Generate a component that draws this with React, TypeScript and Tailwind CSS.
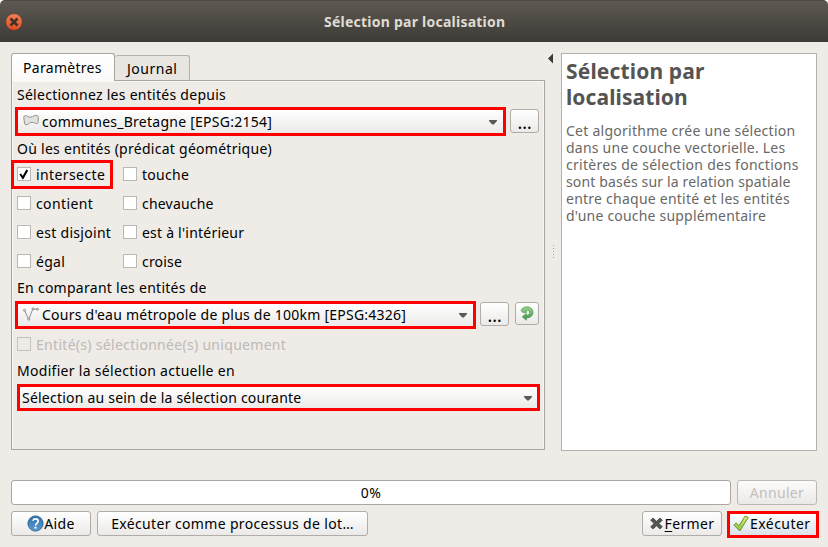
import type { ReactNode } from "react";

const button =
  "flex items-center justify-center rounded-[3px] border border-[#b0aca7] bg-gradient-to-b from-white to-[#ebeae8]";

function Text({ className = "", children }: { className?: string; children: ReactNode }) {
  return <span className={`whitespace-pre ${className}`}>{children}</span>;
}

function Chevron() {
  return (
    <svg className="ml-auto mt-px" width="8" height="5" viewBox="0 0 8 5">
      <path d="M0 0H8V1L4.8 4.5H3.2L0 1Z" fill="#5b5855" />
    </svg>
  );
}

function Dots() {
  return <span className="pt-[2px] text-[18px]">…</span>;
}

function Check({ label, checked = false, disabled = false, className = "" }: { label: string; checked?: boolean; disabled?: boolean; className?: string }) {
  return (
    <div className="flex h-[29px] items-start pt-[7px]">
      <span className={`mr-[5px] flex size-[14px] shrink-0 items-center justify-center border ${disabled ? "border-[#c5c1bd] bg-[#efebe7]" : "border-[#bbb7b3] bg-white"}`}>
        {checked && (
          <svg width="10" height="11" viewBox="0 0 10 11" fill="none">
            <path d="M1.2 5L3.9 8.8L8.3 1" stroke="#000" strokeWidth="2.1" />
          </svg>
        )}
      </span>
      <Text className={`-mt-px ${disabled ? "text-[#bdbab7]" : ""} ${className}`}>{label}</Text>
    </div>
  );
}

export default function App() {
  return (
    <div className="flex h-[547px] w-[828px] flex-col overflow-hidden bg-[#efebe7] font-['Noto_Sans',sans-serif] text-[14px] leading-[18px] text-black">
      <div className="bg-white">
        <header className="flex h-[42px] items-center rounded-t-[5px] border-t border-[#4d4a44] bg-gradient-to-b from-[#5d5951] to-[#3d3b37] pl-[5px]">
          <svg width="18" height="18" viewBox="0 0 18 18">
            <defs>
              <linearGradient id="close" x1="0" y1="0" x2="0" y2="1">
                <stop stopColor="#f58157" />
                <stop offset="1" stopColor="#dd4b20" />
              </linearGradient>
            </defs>
            <circle cx="9" cy="9" r="8.4" fill="url(#close)" stroke="#35332e" strokeWidth=".6" />
            <path d="M5.5 5.5L12.5 12.5M12.5 5.5L5.5 12.5" stroke="#3d3326" strokeWidth="2.6" />
          </svg>
          <Text className="ml-[301px] font-bold tracking-[0.24px] text-[#dfdbd2]">Sélection par localisation</Text>
        </header>
      </div>

      <div className="flex pl-[11px] pt-[11px]">
        <main className="w-[534px]">
          <div className="flex h-[27px] items-end">
            <div className="z-10 -mb-px flex h-[28px] w-[104px] items-center rounded-t-[3px] border border-b-0 border-[#aaa6a2] bg-gradient-to-b from-white to-[#faf9f8] pl-[11px]">
              <Text className="tracking-[0.3px]">Paramètres</Text>
            </div>
            <div className="flex h-[25px] w-[75px] items-center rounded-t-[3px] border border-b-0 border-l-0 border-[#b5b1ad] bg-[#e9e5e1] pl-[12px] pt-px">
              <Text className="tracking-[0.5px]">Journal</Text>
            </div>
          </div>
          <section className="h-[370px] border border-[#aaa6a2] shadow-[inset_-1px_1px_0_#f8f6f4,inset_1px_0_0_#f8f6f4]">
            <div className="flex h-[26px] items-center pl-[5px] pt-[2px]"><Text className="tracking-[0.27px]">Sélectionnez les entités depuis</Text></div>
            <div className="flex pl-[3px]">
              <div className="flex h-[29px] w-[491px] items-center border-3 border-[#ff0000] bg-gradient-to-b from-white to-[#ebeae8] pl-[5px] pr-[6px]">
                <svg className="-mt-[2px]" width="16" height="13" viewBox="0 0 16 13">
                  <path d="M.8 4C.8 1.2 2.6 1 4.6 2.4C6.6 3.6 9 3.2 10.8 2C13 .8 15.3 1.4 15.4 3.4L15 8.6C14.4 10.8 11.8 9 10.6 8.6C8.4 7.8 7 8.6 5.6 9.8C4 11.4 1.6 11 1.6 9.2C1.6 7.4 .8 6 .8 4Z" fill="#e2e2e1" stroke="#8f8f8e" />
                </svg>
                <Text className="ml-[3px] tracking-[0.25px]">communes_Bretagne [EPSG:2154]</Text>
                <Chevron />
              </div>
              <div className={`${button} ml-[4px] mt-[2px] h-[24px] w-[29px]`}><Dots /></div>
            </div>
            <div className="flex h-[24px] items-center pl-[5px] pt-[2px]"><Text className="tracking-[0.27px]">Où les entités (prédicat géométrique)</Text></div>
            <div className="flex">
              <div className="-ml-px w-[107px]">
                <div className="w-[102px] border-3 border-[#ff0000] pl-[3px]">
                  <div className="-my-[3px]"><Check label="intersecte" className="tracking-[0.4px]" checked /></div>
                </div>
                <div className="pl-[6px]">
                  <Check label="contient" className="tracking-[0.38px]" />
                  <Check label="est disjoint" className="tracking-[0.3px]" />
                  <Check label="égal" className="tracking-[0.3px]" />
                </div>
              </div>
              <div className="pl-[5px]">
                <Check label="touche" className="tracking-[0.3px]" />
                <Check label="chevauche" className="tracking-[0.2px]" />
                <Check label="est à l'intérieur" className="tracking-[0.22px]" />
                <Check label="croise" className="tracking-[0.2px]" />
              </div>
            </div>
            <div className="flex h-[25px] items-start pl-[5px] pt-[3px]"><Text className="tracking-[0.27px]">En comparant les entités de</Text></div>
            <div className="flex pl-[3px]">
              <div className="flex h-[28px] w-[461px] items-center border-3 border-[#ff0000] bg-gradient-to-b from-white to-[#ebeae8] pl-[5px] pr-[6px]">
                <svg className="-mt-[2px]" width="16" height="14" viewBox="0 0 16 14" fill="none" stroke="#858482" strokeWidth=".9">
                  <path d="M1.5 3.5L5.7 12.5L9.8 2L14.5 2.3" />
                  <g fill="#f5f5f4"><circle cx="1.5" cy="3.3" r="1" /><circle cx="5.7" cy="12.2" r="1" /><circle cx="10" cy="1.8" r="1" /><circle cx="14.5" cy="2.3" r="1" /></g>
                </svg>
                <Text className="ml-[3px] tracking-[0.24px]">Cours d'eau métropole de plus de 100km [EPSG:4326]</Text>
                <Chevron />
              </div>
              <div className={`${button} ml-[4px] mt-px h-[24px] w-[29px]`}><Dots /></div>
              <div className={`${button} ml-[6px] mt-px h-[23px] w-[24px]`}>
                <svg width="14" height="15" viewBox="0 0 14 15">
                  <defs><linearGradient id="green" x1="0" y1="0" x2="0" y2="1"><stop stopColor="#9bd38c" /><stop offset="1" stopColor="#3f9447" /></linearGradient></defs>
                  <path d="M1.2 4.6C2 2 4.2 .8 7 .8C10.5 .8 13 3.2 13 6.4C13 9.8 10 12 6.4 12V14.3L2.2 10.8L6.4 7.6V9.4C8.5 9.2 9.8 7.8 9.6 6.2C9.4 4.6 7.8 3.8 6.4 4.4C5.6 4.8 6 5.4 6.8 5.6C7 6.6 5.8 7 4.6 6.8C2.8 6.6 1.4 5.8 1.2 4.6Z" fill="url(#green)" stroke="#408947" strokeWidth=".6" />
                </svg>
              </div>
            </div>
            <div className="flex h-[30px] items-start pl-[5px] pt-px"><Check label="Entité(s) sélectionnée(s) uniquement" className="tracking-[0.3px]" disabled /></div>
            <div className="flex h-[25px] items-start pl-[5px] pt-[3px]"><Text className="tracking-[0.3px]">Modifier la sélection actuelle en</Text></div>
            <div className="ml-[5px] flex h-[27px] w-[523px] items-center border-3 border-[#ff0000] bg-gradient-to-b from-white to-[#ebeae8] pl-[2px] pr-[5px]">
              <Text className="tracking-[0.22px]">Sélection au sein de la sélection courante</Text>
              <Chevron />
            </div>
          </section>
        </main>

        <div className="flex w-[16px] flex-col pl-[3px]">
          <svg width="5" height="11" viewBox="0 0 5 11"><path d="M5 .5V10.5L0 5.5Z" fill="#3c3b37" /></svg>
          <div className="ml-[5px] mt-[181px] flex flex-col gap-[2px]">
            {[0, 1, 2, 3, 4].map((n) => <i key={n} className="size-px bg-[#aaa6a2]" />)}
          </div>
        </div>

        <aside className="h-[398px] w-[256px] border border-[#b5b1ad] bg-white pl-[4px] pt-[4px] text-[#696866]">
          <h1 className="text-[21px] font-bold leading-[26px] text-[#555452]">
            <Text className="tracking-[0.15px]">Sélection par</Text><br /><Text className="tracking-[0.1px]">localisation</Text>
          </h1>
          <p className="mt-[12px] leading-[17px]">
            <Text className="tracking-[0.26px]">Cet algorithme crée une sélection</Text><br />
            <Text className="tracking-[0.23px]">dans une couche vectorielle. Les</Text><br />
            <Text className="tracking-[0.27px]">critères de sélection des fonctions</Text><br />
            <Text className="tracking-[0.15px]">sont basés sur la relation spatiale</Text><br />
            <Text className="tracking-[0.24px]">entre chaque entité et les entités</Text><br />
            <Text className="tracking-[0.2px]">d'une couche supplémentaire</Text>
          </p>
        </aside>
      </div>

      <div className="mt-[29px] flex gap-[6px] pl-[11px]">
        <div className="flex h-[25px] w-[720px] items-center justify-center rounded-[3px] border border-[#aaa6a2] bg-white"><Text className="tracking-[0.4px]">0%</Text></div>
        <div className={`${button} h-[25px] w-[80px] opacity-80`}><Text className="tracking-[0.3px] text-[#b7b4b1]">Annuler</Text></div>
      </div>

      <footer className="mt-[6px] flex pl-[11px]">
        <div className={`${button} h-[25px] w-[80px]`}>
          <svg width="17" height="17" viewBox="0 0 17 17">
            <defs><linearGradient id="help" x1="0" y1="0" x2="0" y2="1"><stop stopColor="#2e70aa" /><stop offset="1" stopColor="#5b9bd0" /></linearGradient></defs>
            <circle cx="8.5" cy="8.5" r="7.6" fill="url(#help)" stroke="#2d608f" strokeWidth=".9" />
            <path d="M5.8 5.8C6.3 4.5 7.2 3.9 8.5 3.9C10.1 3.9 11.2 4.8 11.2 6.2C11.2 8 8.5 8.1 8.5 10.4" fill="none" stroke="#fff" strokeWidth="1.6" />
            <circle cx="8.5" cy="12.7" r="1.1" fill="#fff" />
          </svg>
          <Text className="tracking-[0.3px]">Aide</Text>
        </div>
        <div className={`${button} ml-[6px] h-[25px] w-[271px]`}><Text className="tracking-[0.35px]">Exécuter comme processus de lot…</Text></div>
        <div className={`${button} ml-[274px] h-[25px] w-[80px]`}>
          <svg className="-mt-px" width="13" height="13" viewBox="0 0 13 13"><path d="M3 1L6.5 4.3L10 1L12.3 3.2L9 6.5L12.3 9.8L10 12L6.5 8.8L3 12L.7 9.8L4 6.5L.7 3.2Z" fill="#555653" stroke="#393a38" strokeWidth=".7" /></svg>
          <Text className="ml-[2px] tracking-[0.35px]"><span className="underline underline-offset-2">F</span>ermer</Text>
        </div>
        <div className="ml-[5px] flex h-[27px] w-[92px] items-center border-3 border-[#ff0000] bg-gradient-to-b from-white to-[#dae2e9] pl-[3px]">
          <svg className="-mt-[2px]" width="16" height="17" viewBox="0 0 16 17">
            <defs><linearGradient id="ok" x1="0" y1="0" x2="0" y2="1"><stop stopColor="#e1ef78" /><stop offset="1" stopColor="#8bbf3b" /></linearGradient></defs>
            <path d="M.8 10L3.2 8L6 10.8L12.2 1L15.3 2.4L6.8 16Z" fill="url(#ok)" stroke="#659331" />
          </svg>
          <Text className="-mt-[2px] ml-px tracking-[0.45px]">Exécuter</Text>
        </div>
      </footer>
    </div>
  );
}
